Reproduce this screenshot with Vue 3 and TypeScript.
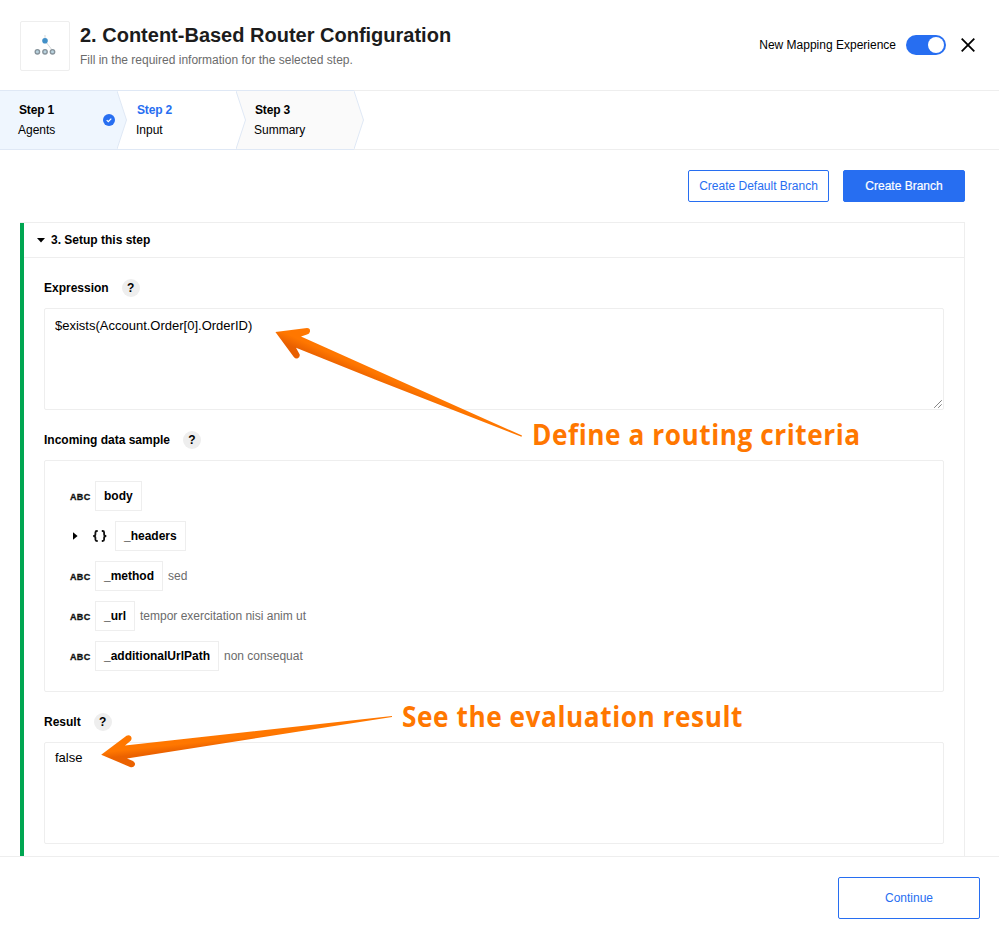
<script setup lang="ts">
import { ref } from 'vue'

interface Step {
  title: string
  label: string
  state: 'done' | 'active' | 'pending'
}

interface Field {
  name: string
  kind: 'string' | 'object'
  value?: string
}

const steps: Step[] = [
  { title: 'Step 1', label: 'Agents', state: 'done' },
  { title: 'Step 2', label: 'Input', state: 'active' },
  { title: 'Step 3', label: 'Summary', state: 'pending' },
]

const fields: Field[] = [
  { name: 'body', kind: 'string' },
  { name: '_headers', kind: 'object' },
  { name: '_method', kind: 'string', value: 'sed' },
  { name: '_url', kind: 'string', value: 'tempor exercitation nisi anim ut' },
  { name: '_additionalUrlPath', kind: 'string', value: 'non consequat' },
]

const expression = ref('$exists(Account.Order[0].OrderID)')
const newMapping = ref(true)
</script>

<template>
  <div class="page">
    <header class="header">
      <div class="logo">
        <svg width="48" height="48" viewBox="0 0 48 48">
          <path d="M24 13v6M25 20l6.5 8.5" stroke="#d3d6d8" stroke-width="1" fill="none" />
          <circle cx="24" cy="18.8" r="2.8" fill="#4290c8" />
          <g fill="#b9d3df" stroke="#87939b" stroke-width="1.4">
            <circle cx="16.4" cy="29.8" r="2.2" />
            <circle cx="24" cy="29.8" r="2.2" />
            <circle cx="31.5" cy="29.8" r="2.2" />
          </g>
        </svg>
      </div>
      <div class="heading">
        <h1>2. Content-Based Router Configuration</h1>
        <p>Fill in the required information for the selected step.</p>
      </div>
      <span class="mapping">New Mapping Experience</span>
      <button class="toggle" :class="{ on: newMapping }" @click="newMapping = !newMapping"><i></i></button>
      <button class="close">
        <svg width="14" height="14" viewBox="0 0 14 14">
          <path d="M.7.7l12.6 12.6M13.3.7L.7 13.3" stroke="#000" stroke-width="1.8" />
        </svg>
      </button>
    </header>

    <nav class="steps">
      <div v-for="step in steps" :key="step.title" class="step" :class="step.state">
        <div class="step-text">
          <b>{{ step.title }}</b>
          <span>{{ step.label }}</span>
        </div>
        <svg v-if="step.state === 'done'" class="check" width="12" height="12" viewBox="0 0 12 12">
          <circle cx="6" cy="6" r="6" fill="#276ef1" />
          <path d="M3.7 6.1l1.6 1.5 3-3" stroke="#fff" stroke-width="1.3" fill="none" />
        </svg>
        <svg class="chevron" width="11" height="58" viewBox="0 0 11 58">
          <path class="fill" d="M0 0L9.5 29 0 58z" />
          <path class="edge" d="M0 0L9.5 29 0 58" />
        </svg>
      </div>
    </nav>

    <main class="content">
      <div class="actions">
        <button class="btn outline default-branch">Create Default Branch</button>
        <button class="btn solid">Create Branch</button>
      </div>

      <section class="panel">
        <div class="panel-inner">
          <div class="panel-head">
            <svg width="8" height="5" viewBox="0 0 8 5"><path d="M0 0h8L4 4.5z" /></svg>
            <b>3. Setup this step</b>
          </div>
          <div class="panel-body">
            <div class="label"><b>Expression</b><i class="help">?</i></div>
            <div class="box area">
              {{ expression }}
              <svg class="grip" width="8" height="8" viewBox="0 0 8 8">
                <path d="M.5 7.5l7-7M4.5 7.5l3-3" stroke="#333" stroke-width="1" stroke-dasharray="1.1 .4" fill="none" />
              </svg>
            </div>

            <div class="label"><b>Incoming data sample</b><i class="help">?</i></div>
            <div class="box tree">
              <div v-for="field in fields" :key="field.name" class="row">
                <span v-if="field.kind === 'string'" class="abc">ABC</span>
                <span v-else class="object">
                  <svg width="5" height="8" viewBox="0 0 5 8"><path d="M0 .3l4.6 3.7L0 7.7z" /></svg>
                  <svg width="15" height="12" viewBox="0 0 15 12" fill="none" stroke="#111" stroke-width="1.8">
                    <path d="M5.7 1H5Q3.4 1 3.4 2.5v1.7Q3.4 6 1.2 6q2.2 0 2.2 1.8v1.7Q3.4 11 5 11h.7M9.8 1h.7q1.6 0 1.6 1.5v1.7q0 1.8 2.2 1.8-2.2 0-2.2 1.8v1.7q0 1.5-1.6 1.5h-.7" />
                  </svg>
                </span>
                <b class="name">{{ field.name }}</b>
                <span v-if="field.value" class="value">{{ field.value }}</span>
              </div>
            </div>

            <div class="label"><b>Result</b><i class="help">?</i></div>
            <div class="box result">false</div>
          </div>
        </div>
      </section>
    </main>

    <footer class="footer">
      <button class="btn outline continue">Continue</button>
    </footer>

    <div class="annotations">
      <svg width="999" height="938" viewBox="0 0 999 938">
        <defs>
          <linearGradient id="g1" gradientUnits="userSpaceOnUse" x1="334" y1="351" x2="327.4" y2="366">
            <stop offset="0.2" stop-color="#ff7700" />
            <stop offset="0.8" stop-color="#e85f00" />
          </linearGradient>
          <linearGradient id="g2" gradientUnits="userSpaceOnUse" x1="150" y1="743" x2="151.5" y2="757">
            <stop offset="0.3" stop-color="#ff7700" />
            <stop offset="0.75" stop-color="#eb6200" />
          </linearGradient>
        </defs>
        <path fill="url(#g1)" d="M275.4 332L307 328.1Q310.4 328.2 310 331.6Q309.6 334 307 334.6L301 336.6L522 435.6L521.5 436.7L375 379.6L296 347.7L299.7 354.5Q300.2 357.5 297.3 358.5Q295.2 358.8 293.8 357Z" />
        <path fill="url(#g2)" d="M101.2 754.8L126.5 735.7Q129 734.4 130.8 736.3Q132.4 738.6 130.7 740.7L125 745.4L392 716L392 717L127 758.4L133 761Q135.7 762.8 134.8 765.2Q133.3 768 130 766.9Z" />
      </svg>
      <span class="note define">Define a routing criteria</span>
      <span class="note evaluate">See the evaluation result</span>
    </div>
  </div>
</template>

<style>
body {
  background: #fff;
}
</style>

<style scoped>
* {
  box-sizing: border-box;
}
.page {
  position: relative;
  display: flex;
  flex-direction: column;
  width: 999px;
  height: 938px;
  overflow: hidden;
  background: #fff;
  color: #000;
  font: 12px/20px "Liberation Sans", Arial, sans-serif;
}
svg {
  display: block;
  flex: none;
}
button {
  padding: 0;
  border: 0;
  background: none;
  font: inherit;
}
.header {
  display: flex;
  align-items: center;
  flex: none;
  height: 90px;
  padding: 0 24px 0 20px;
}
.logo {
  width: 50px;
  height: 50px;
  margin: 2px 10px 0 0;
  border: 1px solid #eee;
  border-radius: 2px;
}
.heading {
  flex: 1;
}
h1 {
  margin: 0;
  color: #1c1c1c;
  font-size: 20px;
  line-height: 28px;
}
.heading p {
  margin: 1px 0 0;
  color: #6b6b6b;
}
.toggle {
  display: flex;
  justify-content: flex-start;
  align-items: center;
  width: 40px;
  height: 20px;
  margin: 0 15px 0 10px;
  padding: 0 2px;
  border-radius: 10px;
  background: #bbb;
}
.toggle.on {
  justify-content: flex-end;
  background: #276ef1;
}
.toggle i {
  width: 16px;
  height: 16px;
  border-radius: 50%;
  background: #fff;
}
.steps {
  display: flex;
  flex: none;
  height: 60px;
  border-top: 1px solid #eee;
  border-bottom: 1px solid #eee;
}
.step {
  position: relative;
  display: flex;
  align-items: center;
  justify-content: space-between;
  width: 118px;
  padding: 0 3px 0 18px;
  box-shadow: 0 -1px #dfe8f5, 0 1px #dfe8f5;
}
.step:first-child {
  width: 117px;
  padding-right: 2px;
}
.step:nth-child(2) {
  width: 119px;
  padding-left: 19px;
}
.step-text {
  display: flex;
  flex-direction: column;
}
.step-text b {
  padding-left: 1px;
  letter-spacing: -0.15px;
}
.step.done {
  z-index: 3;
  background: #eff6fe;
}
.step.active {
  z-index: 2;
  background: #fff;
}
.step.active b {
  color: #276ef1;
}
.step.pending {
  z-index: 1;
  background: #fafafa;
}
.chevron {
  position: absolute;
  top: 0;
  left: 100%;
}
.done .fill {
  fill: #eff6fe;
}
.active .fill {
  fill: #fff;
}
.pending .fill {
  fill: #fafafa;
}
.edge {
  fill: none;
  stroke: #dfe8f5;
}
.content {
  display: flex;
  flex-direction: column;
  flex: none;
  height: 706px;
  padding: 20px 34px 0 20px;
  overflow: hidden;
}
.actions {
  display: flex;
  justify-content: flex-end;
  gap: 14px;
  flex: none;
}
.btn {
  height: 32px;
  border: 1px solid #276ef1;
  border-radius: 2px;
}
.outline {
  color: #276ef1;
}
.solid {
  width: 122px;
  background: #276ef1;
  color: #fff;
  -webkit-text-stroke: 0.2px #fff;
}
.default-branch {
  width: 141px;
}
.panel {
  flex: none;
  height: 660px;
  margin-top: 20px;
  border: 1px solid #eee;
  border-left: 0;
}
.panel-inner {
  height: 100%;
  border-left: 4px solid #00a651;
}
.panel-head {
  display: flex;
  align-items: center;
  gap: 6px;
  height: 35px;
  padding-left: 13px;
  border-bottom: 1px solid #eee;
}
.panel-body {
  padding: 20px 20px 0;
}
.label {
  display: flex;
  align-items: center;
  gap: 13px;
  height: 20px;
  margin-bottom: 10px;
}
.help {
  width: 18px;
  height: 18px;
  border-radius: 50%;
  background: #eee;
  font-style: normal;
  font-weight: bold;
  line-height: 18px;
  text-align: center;
}
.box {
  margin-bottom: 20px;
  border: 1px solid #eee;
  border-radius: 2px;
}
.area {
  position: relative;
  height: 102px;
  padding: 7px 10px;
  font-size: 13px;
}
.grip {
  position: absolute;
  right: 1px;
  bottom: 1px;
}
.tree {
  display: flex;
  flex-direction: column;
  gap: 10px;
  height: 232px;
  padding: 20px 25px;
}
.row {
  display: flex;
  align-items: center;
  height: 30px;
}
.abc {
  width: 25px;
  padding-top: 1px;
  color: #111;
  font: bold 9px/12px "Liberation Sans", Arial, sans-serif;
  letter-spacing: 0.35px;
  -webkit-text-stroke: 0.3px #111;
}
.object {
  display: flex;
  align-items: center;
  gap: 14px;
  width: 45px;
  padding-left: 3px;
}
.name {
  height: 30px;
  padding: 0 8px;
  border: 1px solid #eee;
  line-height: 28px;
}
.value {
  margin-left: 5px;
  color: #6b6b6b;
}
.result {
  height: 102px;
  padding: 5px 10px;
  font-size: 13px;
}
.footer {
  display: flex;
  justify-content: flex-end;
  flex: 1;
  padding: 20px 19px 0;
  border-top: 1px solid #eee;
}
.continue {
  width: 142px;
  height: 42px;
}
.annotations {
  position: absolute;
  inset: 0;
  pointer-events: none;
}
.note {
  position: absolute;
  color: #ff7700;
  font: bold 28.5px/40px "Open Sans", sans-serif;
  letter-spacing: 0.6px;
  white-space: nowrap;
  transform: scaleX(0.92);
  transform-origin: left;
}
.define {
  left: 532px;
  top: 414px;
}
.evaluate {
  left: 402px;
  top: 696px;
}
</style>
